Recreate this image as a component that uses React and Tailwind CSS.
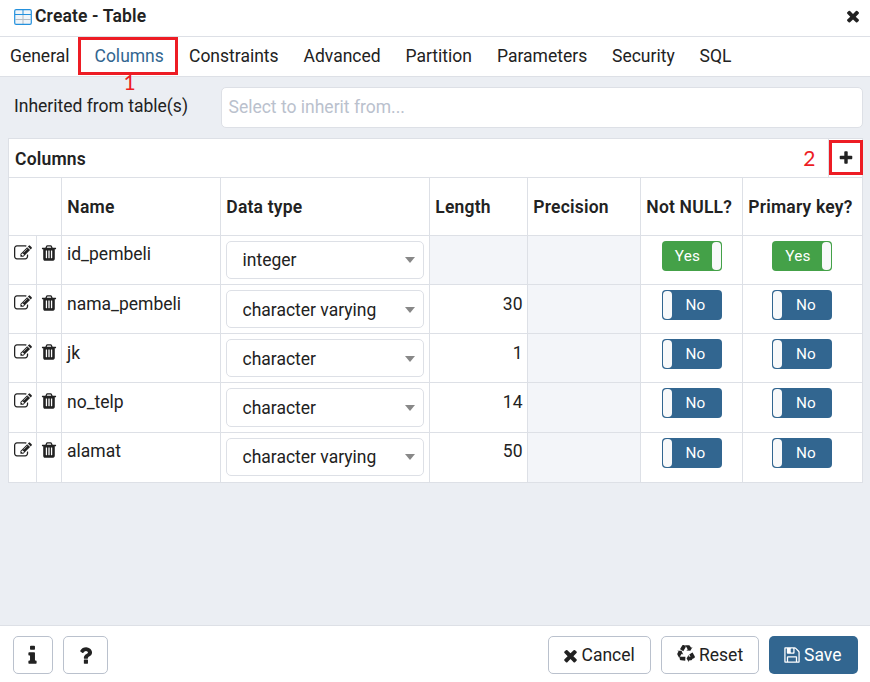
import React from "react";

const PATHS = {
  edit: "M888 1184l116-116-152-152-116 116v56h96v96h56zm440-720q-16-16-33 1l-350 350q-17 17-1 33t33-1l350-350q17-17 1-33zm80 594v190q0 119-84.5 203.5t-203.5 84.5h-832q-119 0-203.5-84.5t-84.5-203.5v-832q0-119 84.5-203.5t203.5-84.5h832q63 0 117 25 15 7 18 23 3 17-9 29l-49 49q-14 14-32 8-23-6-45-6h-832q-66 0-113 47t-47 113v832q0 66 47 113t113 47h832q66 0 113-47t47-113v-126q0-13 9-22l64-64q15-15 35-7t20 29zm-96-738l288 288-672 672h-288v-288zm444 132l-92 92-288-288 92-92q28-28 68-28t68 28l152 152q28 28 28 68t-28 68z",
  trash: "M704 1376v-704q0-14-9-23t-23-9h-64q-14 0-23 9t-9 23v704q0 14 9 23t23 9h64q14 0 23-9t9-23zm256 0v-704q0-14-9-23t-23-9h-64q-14 0-23 9t-9 23v704q0 14 9 23t23 9h64q14 0 23-9t9-23zm256 0v-704q0-14-9-23t-23-9h-64q-14 0-23 9t-9 23v704q0 14 9 23t23 9h64q14 0 23-9t9-23zm-544-992h448l-48-117q-7-9-17-11h-317q-10 2-17 11zm928 32v64q0 14-9 23t-23 9h-96v948q0 83-47 143.5t-113 60.5h-832q-66 0-113-58.5t-47-141.5v-952h-96q-14 0-23-9t-9-23v-64q0-14 9-23t23-9h309l70-167q15-37 54-63t79-26h320q40 0 79 26t54 63l70 167h309q14 0 23 9t9 23z",
  close: "M1490 1322q0 40-28 68l-136 136q-28 28-68 28t-68-28l-294-294-294 294q-28 28-68 28t-68-28l-136-136q-28-28-28-68t28-68l294-294-294-294q-28-28-28-68t28-68l136-136q28-28 68-28t68 28l294 294 294-294q28-28 68-28t68 28l136 136q28 28 28 68t-28 68l-294 294 294 294q28 28 28 68z",
  plus: "M1600 736v192q0 40-28 68t-68 28h-416v416q0 40-28 68t-68 28h-192q-40 0-68-28t-28-68v-416h-416q-40 0-68-28t-28-68v-192q0-40 28-68t68-28h416v-416q0-40 28-68t68-28h192q40 0 68 28t28 68v416h416q40 0 68 28t28 68z",
  info: "M1216 1344v128q0 26-19 45t-45 19h-512q-26 0-45-19t-19-45v-128q0-26 19-45t45-19h64v-384h-64q-26 0-45-19t-19-45v-128q0-26 19-45t45-19h384q26 0 45 19t19 45v576h64q26 0 45 19t19 45zm-128-1152v192q0 26-19 45t-45 19h-256q-26 0-45-19t-19-45v-192q0-26 19-45t45-19h256q26 0 45 19t19 45z",
  question: "M1088 1256v240q0 16-12 28t-28 12h-240q-16 0-28-12t-12-28v-240q0-16 12-28t28-12h240q16 0 28 12t12 28zm316-600q0 54-15.5 101t-35 76.5-55 59.5-57.5 43.5-61 35.5q-41 23-68.5 65t-27.5 67q0 17-12 32.5t-28 15.5h-240q-15 0-25.5-18.5t-10.5-37.5v-45q0-83 65-156.5t143-108.5q59-27 84-56t25-76q0-42-46.5-74t-107.5-32q-65 0-108 29-35 25-107 115-13 16-31 16-12 0-25-8l-164-125q-13-10-15.5-25t5.5-28q160-266 464-266 80 0 161 31t146 83 106 127.5 41 158.5z",
  recycle: "M836 1169l-15 368-2 22-420-29q-36-3-67-31.5t-47-65.5q-11-27-14.5-55t4-65 12-55 21.5-64 19-53q78 12 509 28zM449 583l180 379-147-92q-63 72-111.5 144.5t-72.5 125-39.5 94.5-18.5 63l-4 21-190-357q-17-26-18-56t6-47l8-18q35-63 114-188l-140-86zM1680 1100l-188 359q-12 29-36.5 46.5t-43.5 20.5l-18 4q-71 7-219 12l8 164-230-367 211-362 7 173q170 16 283 5t170-33zM895 176q-47 63-265 435l-317-187-19-12 225-356q20-31 60-45t80-10q24 2 48.5 12t42 21 41.5 33 36 34.5 36 39.5 32 35zM1550 747l212 363q18 37 12.5 76t-27.5 74q-13 20-33 37t-38 28-48.5 22-47 16-51.5 14-46 12q-34-72-265-436l313-195zM1407 279l142-83-220 373-419-20 151-86q-34-89-75-166t-75.5-123.5-64.5-80-47-46.5l-17-13 405 1q31-3 58 10.5t39 28.5l11 15q39 61 112 190z",
  save: "M512 1536h768v-384h-768v384zm896 0h128v-896q0-14-10-38.5t-20-34.5l-281-281q-10-10-34-20t-39-10v416q0 40-28 68t-68 28h-576q-40 0-68-28t-28-68v-416h-128v1280h128v-416q0-40 28-68t68-28h832q40 0 68 28t28 68v416zm-384-928v-320q0-13-9.5-22.5t-22.5-9.5h-192q-13 0-22.5 9.5t-9.5 22.5v320q0 13 9.5 22.5t22.5 9.5h192q13 0 22.5-9.5t9.5-22.5zm640 32v928q0 40-28 68t-68 28h-1344q-40 0-68-28t-28-68v-1344q0-40 28-68t68-28h928q40 0 88 20t76 48l280 280q28 28 48 76t20 88z",
};

function Icon({ name, className }) {
  return (
    <svg viewBox="0 0 1792 1792" fill="currentColor" className={"shrink-0 " + className}>
      <path d={PATHS[name]} />
    </svg>
  );
}

function TableIcon() {
  return (
    <svg viewBox="0 0 18 16" className="h-4 w-[18px] shrink-0">
      <rect x="1" y="1" width="16" height="14" rx="1.2" fill="#f0f4f8" />
      <path d="M1.5 10.5h15M9 6v9" stroke="#b4bcc4" fill="none" />
      <path d="M1 5.5h16M9 1v4.5" stroke="#2491dd" fill="none" />
      <rect x="0.7" y="0.7" width="16.6" height="14.6" rx="1.4" fill="none" stroke="#2491dd" strokeWidth="1.2" />
    </svg>
  );
}

function Toggle({ on }) {
  return on ? (
    <div className="mt-[5px] flex h-[30px] w-[60px] rounded-[4px] bg-[#44a148] p-px text-[15.3px] leading-[28px] tracking-[0.2px] text-white">
      <span className="flex-1 pl-px text-center">Yes</span>
      <span className="w-[9px] rounded-[4px] bg-[#f8f9fa]" />
    </div>
  ) : (
    <div className="mt-[5px] flex h-[30px] w-[60px] rounded-[4px] bg-[#326690] p-px text-[15.3px] leading-[28px] tracking-[0.2px] text-white">
      <span className="w-[9px] rounded-[4px] bg-[#f8f9fa]" />
      <span className="flex-1 pr-px text-center">No</span>
    </div>
  );
}

const TABS = [
  ["General", "w-[78px] pl-[10px]"],
  ["Columns", "w-[100px] pl-[13.5px] border-[3px] border-[#ed1c24] text-[#326690]"],
  ["Constraints", "w-[115px] pl-[11px]"],
  ["Advanced", "w-[102px] pl-[10.5px]"],
  ["Partition", "w-[91px] pl-[10.5px]"],
  ["Parameters", "w-[116px] pl-[11px]"],
  ["Security", "w-[87px] pl-[10px]"],
  ["SQL", "pl-[10.5px]"],
];

const ROWS = [
  { name: "id_pembeli", type: "integer", length: null, on: true, h: "h-[49px]", pad: "pt-[5px]", iconPad: "pt-[8px]", select: "h-[38px]" },
  { name: "nama_pembeli", type: "character varying", length: 30, on: false, h: "h-[49px]", pad: "pt-[6px]", iconPad: "pt-[9px]", select: "h-[38px] pt-px" },
  { name: "jk", type: "character", length: 1, on: false, h: "h-[49px]", pad: "pt-[6px]", iconPad: "pt-[9px]", select: "h-[38px] pt-px" },
  { name: "no_telp", type: "character", length: 14, on: false, h: "h-[50px]", pad: "pt-[6px]", iconPad: "pt-[9px]", select: "h-[39px] pt-px" },
  { name: "alamat", type: "character varying", length: 50, on: false, h: "h-[49px]", pad: "pt-[5px]", iconPad: "pt-[8px]", select: "h-[38px]" },
];

const GRID = "grid grid-cols-[28px_25px_159px_209px_98px_113px_102px_120px]";
const HEAD = "grid grid-cols-[53px_159px_209px_98px_113px_102px_120px]";
const HEADINGS = ["", "Name", "Data type", "Length", "Precision", "Not NULL?", "Primary key?"];

export default function App() {
  return (
    <div className="flex h-[682px] w-[870px] flex-col overflow-hidden bg-[#ebeef3] font-[Roboto,sans-serif] text-[17.5px] leading-[26px] text-[#222]">
      <header className="flex h-[37px] shrink-0 items-start border-b border-[#dde0e6] bg-white pl-[14px] pr-2">
        <div className="mt-[9px]"><TableIcon /></div>
        <h1 className="ml-[3px] mt-[3px] flex-1 font-semibold tracking-[0.15px]">Create - Table</h1>
        <Icon name="close" className="mt-[7px] size-[18px]" />
      </header>
      <nav className="relative flex h-10 shrink-0 border-b border-[#dde0e6] bg-white">
        {TABS.map(([label, cls]) => (
          <div key={label} className={"flex h-[38px] shrink-0 items-center whitespace-nowrap " + cls}>{label}</div>
        ))}
        <span className="absolute left-[123.5px] top-[32px] font-[Lato,sans-serif] text-[21px] text-[#ed1c24]">1</span>
      </nav>
      <main className="flex flex-1 flex-col px-2 pt-[10px]">
        <div className="flex h-[41px] shrink-0">
          <label className="w-[213px] shrink-0 pl-[6px] pt-[6px]">Inherited from table(s)</label>
          <div className="w-[642px] shrink-0 rounded-[5px] border border-[#dde0e6] bg-white pl-[6.5px] pt-[6px] text-[#bac1cd]">Select to inherit from...</div>
        </div>
        <section className="mt-[10px] w-[855px] border border-[#dde0e6] bg-white">
          <div className="flex h-[39px] items-center border-b border-[#dde0e6]">
            <h2 className="flex-1 pl-[6px] pt-[2px] font-semibold tracking-[0.2px]">Columns</h2>
            <span className="mr-[12.5px] font-[Lato,sans-serif] text-[21px] text-[#ed1c24]">2</span>
            <div className="h-full border-l border-[#dde0e6] pt-px">
              <button className="-mr-px flex h-[35px] w-[34px] items-center justify-center border-[3px] border-[#ed1c24]">
                <Icon name="plus" className="size-4" />
              </button>
            </div>
          </div>
          <div className={HEAD + " h-[58px] border-b border-[#dde0e6]"}>
            {HEADINGS.map((t, i) => (
              <div key={i} className="flex items-center whitespace-nowrap border-r border-[#dde0e6] pl-[5.3px] font-semibold tracking-[0.2px] last:border-r-0">{t}</div>
            ))}
          </div>
          {ROWS.map((r) => (
            <div key={r.name} className={GRID + " border-b border-[#dde0e6] last:border-b-0 " + r.h}>
              <div className={"border-r border-[#dde0e6] pl-[4.5px] " + r.iconPad}><Icon name="edit" className="size-[18px]" /></div>
              <div className={"border-r border-[#dde0e6] pl-[3px] " + r.iconPad}><Icon name="trash" className="size-[18px]" /></div>
              <div className={"border-r border-[#dde0e6] pl-[5px] " + r.pad}>{r.name}</div>
              <div className="border-r border-[#dde0e6] px-[5px] pt-[5px]">
                <div className={"flex items-center justify-between rounded-[5px] border border-[#dde0e6] pl-[15.5px] pr-2 " + r.select}>
                  {r.type}
                  <span className="border-x-[5px] border-t-[6px] border-x-transparent border-t-[#888]" />
                </div>
              </div>
              <div className={"border-r border-[#dde0e6] pr-[4.5px] text-right " + r.pad + (r.length === null ? " bg-[#f3f5f9]" : "")}>{r.length}</div>
              <div className="border-r border-[#dde0e6] bg-[#f3f5f9]" />
              <div className="flex justify-center border-r border-[#dde0e6]"><Toggle on={r.on} /></div>
              <div className="flex pl-[29px]"><Toggle on={r.on} /></div>
            </div>
          ))}
        </section>
      </main>
      <footer className="flex h-[57px] shrink-0 items-start border-t border-[#dde0e6] bg-white pl-[13px] pr-3 pt-[10px]">
        <button className="flex h-[38px] w-10 items-center justify-center rounded-[5px] border border-[#bac1cd] pr-px"><Icon name="info" className="size-[23px]" /></button>
        <button className="ml-[10px] flex h-[38px] w-[45px] items-center justify-center rounded-[5px] border border-[#bac1cd]"><Icon name="question" className="size-[23px]" /></button>
        <div className="flex-1" />
        <button className="flex h-[38px] w-[103px] items-center rounded-[5px] border border-[#bac1cd] pl-3"><Icon name="close" className="mr-[1.5px] size-[19px]" />Cancel</button>
        <button className="ml-[10px] flex h-[38px] w-[98px] items-center rounded-[5px] border border-[#bac1cd] pl-[15px]"><Icon name="recycle" className="mb-[2px] mr-1 size-[18px]" />Reset</button>
        <button className="ml-[10px] flex h-[38px] w-[89px] items-center rounded-[5px] bg-[#326690] pl-[14px] text-white"><Icon name="save" className="mr-[3px] size-[18px]" />Save</button>
      </footer>
    </div>
  );
}
